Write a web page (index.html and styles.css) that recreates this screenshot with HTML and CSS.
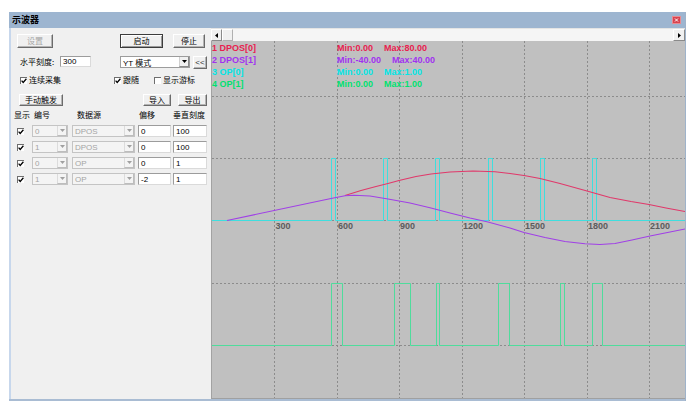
FILE: index.html
```html
<!DOCTYPE html>
<html>
<head>
<meta charset="utf-8">
<link rel="stylesheet" href="styles.css">
</head>
<body>
<div class="win">
  <div class="titlebar">
    <span class="title">示波器</span>
    <span class="close"><svg width="9" height="8" viewBox="0 0 9 8"><rect x="0" y="0" width="9" height="8" fill="#d8434f"/><rect x="0.5" y="0.5" width="8" height="7" fill="none" stroke="#e98a90"/><path d="M3 2.5 L6 5.5 M6 2.5 L3 5.5" stroke="#fff" stroke-width="1"/></svg></span>
  </div>
  <div class="body">
    <div class="left">
      <div class="row r1">
        <span class="btn dis b-set">设置</span>
        <span class="btn def b-start">启动</span>
        <span class="btn b-stop">停止</span>
      </div>
      <div class="row r2">
        <span class="lbl l-scale">水平刻度:</span>
        <span class="inp i-300">300</span>
        <span class="sel s-mode"><span class="val">YT 模式</span><span class="arr"><svg width="5" height="3" viewBox="0 0 5 3"><path d="M0 0 H5 L2.5 3 Z" fill="#000"/></svg></span></span>
        <span class="btn b-back">&lt;&lt;</span>
      </div>
      <div class="row r3">
        <span class="chk c1"><span class="box"><svg width="6" height="6" viewBox="0 0 6 6"><path d="M0.6 2.6 L2.2 4.4 L5.4 0.8" fill="none" stroke="#000" stroke-width="1.3"/></svg></span>连续采集</span>
        <span class="chk c2"><span class="box"><svg width="6" height="6" viewBox="0 0 6 6"><path d="M0.6 2.6 L2.2 4.4 L5.4 0.8" fill="none" stroke="#000" stroke-width="1.3"/></svg></span>跟随</span>
        <span class="chk c3"><span class="box"></span>显示游标</span>
      </div>
      <div class="row r4">
        <span class="btn b-trig">手动触发</span>
        <span class="btn b-imp">导入</span>
        <span class="btn b-exp">导出</span>
      </div>
      <div class="row hdr">
        <span class="h-show">显示</span>
        <span class="h-num">编号</span>
        <span class="h-src">数据源</span>
        <span class="h-off">偏移</span>
        <span class="h-scale">垂直刻度</span>
      </div>
      <div class="row trow">
        <span class="box tbox"><svg width="6" height="6" viewBox="0 0 6 6"><path d="M0.6 2.6 L2.2 4.4 L5.4 0.8" fill="none" stroke="#000" stroke-width="1.3"/></svg></span>
        <span class="sel dsel t-num"><span class="val">0</span><span class="arr"><svg width="5" height="3" viewBox="0 0 5 3"><path d="M0 0 H5 L2.5 3 Z" fill="#a0a0a0"/></svg></span></span>
        <span class="sel dsel t-src"><span class="val">DPOS</span><span class="arr"><svg width="5" height="3" viewBox="0 0 5 3"><path d="M0 0 H5 L2.5 3 Z" fill="#a0a0a0"/></svg></span></span>
        <span class="inp t-off">0</span>
        <span class="inp t-scale">100</span>
      </div>
      <div class="row trow">
        <span class="box tbox"><svg width="6" height="6" viewBox="0 0 6 6"><path d="M0.6 2.6 L2.2 4.4 L5.4 0.8" fill="none" stroke="#000" stroke-width="1.3"/></svg></span>
        <span class="sel dsel t-num"><span class="val">1</span><span class="arr"><svg width="5" height="3" viewBox="0 0 5 3"><path d="M0 0 H5 L2.5 3 Z" fill="#a0a0a0"/></svg></span></span>
        <span class="sel dsel t-src"><span class="val">DPOS</span><span class="arr"><svg width="5" height="3" viewBox="0 0 5 3"><path d="M0 0 H5 L2.5 3 Z" fill="#a0a0a0"/></svg></span></span>
        <span class="inp t-off">0</span>
        <span class="inp t-scale">100</span>
      </div>
      <div class="row trow">
        <span class="box tbox"><svg width="6" height="6" viewBox="0 0 6 6"><path d="M0.6 2.6 L2.2 4.4 L5.4 0.8" fill="none" stroke="#000" stroke-width="1.3"/></svg></span>
        <span class="sel dsel t-num"><span class="val">0</span><span class="arr"><svg width="5" height="3" viewBox="0 0 5 3"><path d="M0 0 H5 L2.5 3 Z" fill="#a0a0a0"/></svg></span></span>
        <span class="sel dsel t-src"><span class="val">OP</span><span class="arr"><svg width="5" height="3" viewBox="0 0 5 3"><path d="M0 0 H5 L2.5 3 Z" fill="#a0a0a0"/></svg></span></span>
        <span class="inp t-off">0</span>
        <span class="inp t-scale">1</span>
      </div>
      <div class="row trow">
        <span class="box tbox"><svg width="6" height="6" viewBox="0 0 6 6"><path d="M0.6 2.6 L2.2 4.4 L5.4 0.8" fill="none" stroke="#000" stroke-width="1.3"/></svg></span>
        <span class="sel dsel t-num"><span class="val">1</span><span class="arr"><svg width="5" height="3" viewBox="0 0 5 3"><path d="M0 0 H5 L2.5 3 Z" fill="#a0a0a0"/></svg></span></span>
        <span class="sel dsel t-src"><span class="val">OP</span><span class="arr"><svg width="5" height="3" viewBox="0 0 5 3"><path d="M0 0 H5 L2.5 3 Z" fill="#a0a0a0"/></svg></span></span>
        <span class="inp t-off">-2</span>
        <span class="inp t-scale">1</span>
      </div>
    </div>
    <div class="right">
      <div class="scroll">
        <span class="sbtn s-left"><svg width="3" height="5" viewBox="0 0 3 5"><path d="M3 0 V5 L0 2.5 Z" fill="#000"/></svg></span>
        <span class="sbtn s-thumb"></span>
        <span class="s-track"></span>
        <span class="sbtn s-right"><svg width="3" height="5" viewBox="0 0 3 5"><path d="M0 0 V5 L3 2.5 Z" fill="#000"/></svg></span>
      </div>
      <div class="plot">
        <svg width="474" height="357" viewBox="0 0 474 357">
          <rect x="0" y="0" width="474" height="357" fill="#c0c0c0"/>
          <line x1="0.5" y1="0" x2="0.5" y2="357" stroke="#a2a2a2"/>
          <g stroke="#8c8c8c" stroke-width="1" stroke-dasharray="2 2">
            <line x1="63.5" y1="0" x2="63.5" y2="357"/>
            <line x1="126.5" y1="0" x2="126.5" y2="357"/>
            <line x1="188.5" y1="0" x2="188.5" y2="357"/>
            <line x1="251.5" y1="0" x2="251.5" y2="357"/>
            <line x1="313.5" y1="0" x2="313.5" y2="357"/>
            <line x1="376.5" y1="0" x2="376.5" y2="357"/>
            <line x1="438.5" y1="0" x2="438.5" y2="357"/>
            <line x1="1" y1="55.5" x2="474" y2="55.5"/>
            <line x1="1" y1="117.5" x2="474" y2="117.5"/>
            <line x1="1" y1="179.5" x2="474" y2="179.5"/>
            <line x1="1" y1="242.5" x2="474" y2="242.5"/>
            <line x1="1" y1="304.5" x2="474" y2="304.5"/>
          </g>
          <g class="axis">
            <text x="64.5" y="188">300</text>
            <text x="127" y="188">600</text>
            <text x="189" y="188">900</text>
            <text x="252" y="188">1200</text>
            <text x="314" y="188">1500</text>
            <text x="377" y="188">1800</text>
            <text x="439" y="188">2100</text>
          </g>
          <path d="M1,179.5 H120.5 V117.5 H124.5 V179.5 H172.5 V117.5 H176.5 V179.5 H224.5 V117.5 H228.5 V179.5 H277.5 V117.5 H281.5 V179.5 H329.5 V117.5 H333.5 V179.5 H381.5 V117.5 H385.5 V179.5 H474" fill="none" stroke="#3fdede" stroke-width="1"/>
          <path d="M1,304.5 H120.5 V242.5 H131.5 V304.5 H183.5 V242.5 H199.5 V304.5 H225.5 V242.5 H228.5 V304.5 H287.5 V242.5 H298.5 V304.5 H349.5 V242.5 H353.5 V304.5 H381.5 V242.5 H391.5 V304.5 H474" fill="none" stroke="#4fdc9c" stroke-width="1"/>
          <polyline points="134,154.5 150,149.5 165,145.5 177,142.5 188,139.5 205,135.5 220,133 239,131 262,130 284,130.8 299,132.5 313,134.5 329,137.5 349,142.5 376,150 399,156.5 420,160.5 438,163.5 455,167 474,170.5" fill="none" stroke="#e0386a" stroke-width="1.1"/>
          <polyline points="16,179.5 120,157.5 134,154.7 143,154.3 159,155 177,158 199,162 220,167 239,172 259,177 277,181 299,187 313,191.5 334,196.5 354,200.5 374,202.8 389,203.5 404,202.5 421,199 439,195 459,191 474,188" fill="none" stroke="#a040e6" stroke-width="1.1"/>
          <g class="legend">
            <text x="1" y="9.5" fill="#e8204f">1 DPOS[0]</text>
            <text x="126" y="9.5" fill="#e8204f">Min:0.00</text>
            <text x="173" y="9.5" fill="#e8204f">Max:80.00</text>
            <text x="1" y="21.5" fill="#a032f0">2 DPOS[1]</text>
            <text x="126" y="21.5" fill="#a032f0">Min:-40.00</text>
            <text x="181" y="21.5" fill="#a032f0">Max:40.00</text>
            <text x="1" y="33.5" fill="#00e6e6">3 OP[0]</text>
            <text x="126" y="33.5" fill="#00e6e6">Min:0.00</text>
            <text x="173" y="33.5" fill="#00e6e6">Max:1.00</text>
            <text x="1" y="45.5" fill="#00e070">4 OP[1]</text>
            <text x="126" y="45.5" fill="#00e070">Min:0.00</text>
            <text x="173" y="45.5" fill="#00e070">Max:1.00</text>
          </g>
        </svg>
      </div>
    </div>
  </div>
</div>
</body>
</html>
```

FILE: styles.css
```css
* { box-sizing: border-box; margin: 0; padding: 0; }
html, body { background: #ffffff; }
body {
  font-family: "Noto Sans CJK SC", "Liberation Sans", sans-serif;
  font-size: 8px;
  color: #000;
}
.win {
  margin: 12px 0 0 9px;
  width: 677px;
  height: 389px;
  display: flex;
  flex-direction: column;
  border-right: 1px solid #9fb3ca;
}
.titlebar {
  height: 16px;
  flex: none;
  background: #9db5d0;
  display: flex;
  justify-content: space-between;
  align-items: center;
  padding: 0 4px 0 3px;
}
.title { font-weight: 700; font-size: 9px; line-height: 16px; }
.close { display: flex; width: 9px; height: 8px; }
.body {
  flex: 1;
  display: flex;
  border-bottom: 2px solid #a9bcd3;
}
.left {
  width: 202px;
  flex: none;
  background: #f0f0f0;
  border-left: 2px solid #c7d7ec;
  display: flex;
  flex-direction: column;
}
.right { flex: 1; display: flex; flex-direction: column; }
.row { display: flex; align-items: flex-start; flex: none; }

.btn {
  display: flex;
  align-items: center;
  justify-content: center;
  background: #f0f0f0;
  border: 1px solid;
  border-color: #ffffff #6b6b6b #6b6b6b #ffffff;
  box-shadow: inset -1px -1px 0 #b4b4b4;
  line-height: 10px;
  white-space: nowrap;
}
.btn.def {
  border-color: #3c3c3c;
  box-shadow: inset 1px 1px 0 #ffffff, inset -1px -1px 0 #9a9a9a;
}
.btn.dis { color: #a6a6a6; }

.r1 { margin-top: 6px; height: 14px; }
.r1 .btn { height: 14px; }
.b-set { margin-left: 6px; width: 36px; }
.b-start { margin-left: 67px; width: 43px; }
.b-stop { margin-left: 10px; width: 32px; }

.r2 { margin-top: 8px; height: 13px; }
.lbl { line-height: 11px; }
.l-scale { margin-left: 9px; width: 40px; }
.inp {
  display: flex;
  align-items: center;
  background: #ffffff;
  border: 1px solid;
  border-color: #9c9c9c #dadada #dadada #9c9c9c;
  font-family: "Liberation Sans", sans-serif;
  font-size: 8px;
  padding-left: 2px;
  height: 12px;
}
.i-300 { width: 31px; height: 11px; }
.sel {
  display: flex;
  align-items: stretch;
  background: #ffffff;
  border: 1px solid #9c9c9c;
  height: 12px;
}
.sel .val {
  flex: 1;
  display: flex;
  align-items: center;
  padding-left: 2px;
  white-space: nowrap;
  font-family: "Liberation Sans", "Noto Sans CJK SC", sans-serif;
}
.sel .arr {
  width: 10px;
  display: flex;
  align-items: center;
  justify-content: center;
  background: #f0f0f0;
  border-left: 1px solid #d0d0d0;
  border-right: 1px solid #8a8a8a;
  border-bottom: 1px solid #8a8a8a;
}
.s-mode { margin-left: 29px; width: 70px; }
.b-back { margin-left: 3px; width: 14px; height: 13px; font-family: "Liberation Sans", sans-serif; font-size: 8px; color: #333; }

.r3 { margin-top: 6px; height: 10px; align-items: center; }
.chk { display: flex; align-items: center; line-height: 10px; white-space: nowrap; }
.box {
  width: 7px;
  height: 7px;
  flex: none;
  background: #ffffff;
  border-top: 1px solid #6e6e6e;
  border-left: 1px solid #6e6e6e;
  display: flex;
  align-items: center;
  justify-content: center;
  margin-right: 2px;
}
.c1 { margin-left: 9px; width: 94px; }
.c2 { width: 40px; }

.r4 { margin-top: 9px; height: 12px; }
.r4 .btn { height: 12px; }
.b-trig { margin-left: 8px; width: 44px; }
.b-imp { margin-left: 80px; width: 28px; }
.b-exp { margin-left: 7px; width: 29px; }

.hdr { margin-top: 4px; height: 10px; line-height: 10px; white-space: nowrap; }
.h-show { margin-left: 3px; width: 20px; }
.h-num { width: 43px; }
.h-src { width: 62px; }
.h-off { width: 34px; }

.trow { margin-top: 4px; height: 12px; align-items: center; }
.hdr + .trow { margin-top: 5px; }
.tbox { margin-left: 6px; margin-right: 0; }
.dsel { background: #f4f4f4; border-color: #c4c4c4; color: #a4a4a4; }
.dsel .val { font-size: 8px; }
.dsel .arr { background: #f4f4f4; border-left: 1px solid #dcdcdc; border-right-color: #bdbdbd; border-bottom-color: #bdbdbd; }
.t-num { margin-left: 8px; width: 36px; }
.t-src { margin-left: 4px; width: 63px; }
.t-off { margin-left: 3px; width: 33px; }
.t-scale { margin-left: 2px; width: 34px; }

.scroll {
  height: 13px;
  flex: none;
  display: flex;
  background: #f5f5f5;
  border-top: 1px solid #e4e4e4;
}
.sbtn {
  display: flex;
  align-items: center;
  justify-content: center;
  background: #f0f0f0;
  border: 1px solid;
  border-color: #ffffff #8a8a8a #8a8a8a #ffffff;
}
.s-left { width: 11px; }
.s-thumb { width: 11px; border-color: #ffffff #b0b0b0 #b0b0b0 #ffffff; }
.s-track { flex: 1; }
.s-right { width: 12px; }

.plot {
  height: 358px;
  flex: none;
  border-bottom: 1px solid #a0a0a0;
  background: #c0c0c0;
  line-height: 0;
}
.plot svg { display: block; }
.axis text {
  font-family: "Liberation Sans", sans-serif;
  font-size: 9px;
  font-weight: 700;
  fill: #5c5c5c;
}
.legend text {
  font-family: "Liberation Sans", sans-serif;
  font-size: 9px;
  font-weight: 700;
}
```
